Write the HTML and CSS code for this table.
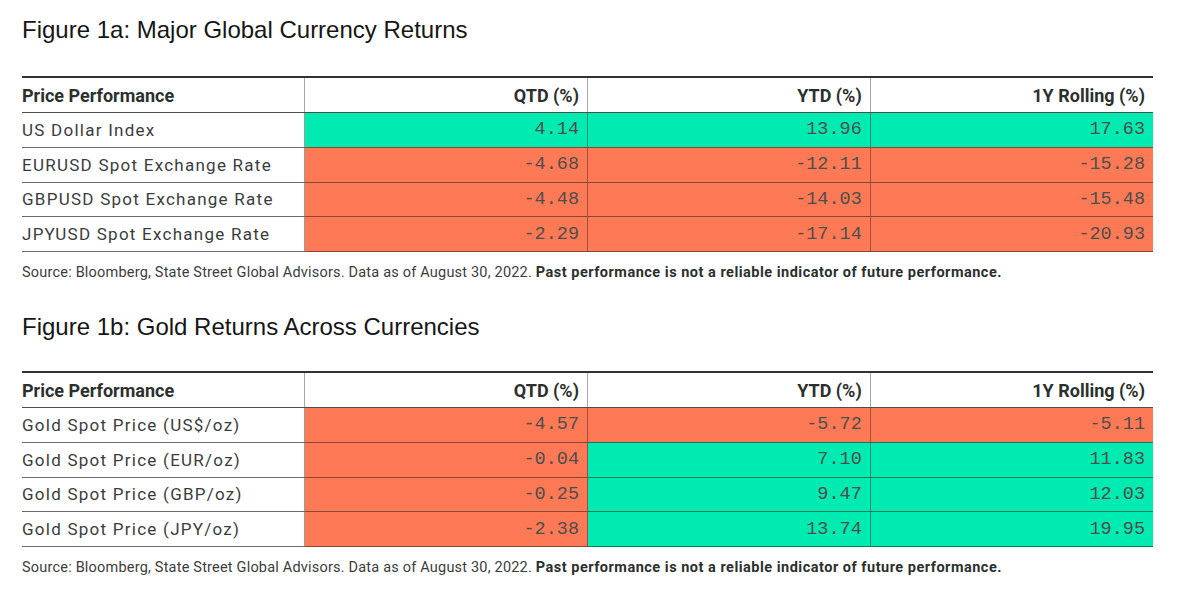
FILE: index.html
```html
<!DOCTYPE html>
<html>
<head>
<meta charset="utf-8">
<link rel="stylesheet" href="styles.css">
</head>
<body>
<div class="page">
  <section class="figure">
    <h1 class="title">Figure 1a: Major Global Currency Returns</h1>
    <table class="perf">
      <thead>
        <tr><th class="lbl">Price Performance</th><th>QTD (%)</th><th>YTD (%)</th><th>1Y Rolling (%)</th></tr>
      </thead>
      <tbody>
        <tr><td class="lbl">US Dollar Index</td><td class="pos">4.14</td><td class="pos">13.96</td><td class="pos">17.63</td></tr>
        <tr><td class="lbl">EURUSD Spot Exchange Rate</td><td class="neg">-4.68</td><td class="neg">-12.11</td><td class="neg">-15.28</td></tr>
        <tr><td class="lbl">GBPUSD Spot Exchange Rate</td><td class="neg">-4.48</td><td class="neg">-14.03</td><td class="neg">-15.48</td></tr>
        <tr><td class="lbl">JPYUSD Spot Exchange Rate</td><td class="neg">-2.29</td><td class="neg">-17.14</td><td class="neg">-20.93</td></tr>
      </tbody>
    </table>
    <p class="source">Source: Bloomberg, State Street Global Advisors. Data as of August 30, 2022. <b>Past performance is not a reliable indicator of future performance.</b></p>
  </section>
  <section class="figure second">
    <h1 class="title">Figure 1b: Gold Returns Across Currencies</h1>
    <table class="perf">
      <thead>
        <tr><th class="lbl">Price Performance</th><th>QTD (%)</th><th>YTD (%)</th><th>1Y Rolling (%)</th></tr>
      </thead>
      <tbody>
        <tr><td class="lbl">Gold Spot Price (US$/oz)</td><td class="neg">-4.57</td><td class="neg">-5.72</td><td class="neg">-5.11</td></tr>
        <tr><td class="lbl">Gold Spot Price (EUR/oz)</td><td class="neg">-0.04</td><td class="pos">7.10</td><td class="pos">11.83</td></tr>
        <tr><td class="lbl">Gold Spot Price (GBP/oz)</td><td class="neg">-0.25</td><td class="pos">9.47</td><td class="pos">12.03</td></tr>
        <tr><td class="lbl">Gold Spot Price (JPY/oz)</td><td class="neg">-2.38</td><td class="pos">13.74</td><td class="pos">19.95</td></tr>
      </tbody>
    </table>
    <p class="source">Source: Bloomberg, State Street Global Advisors. Data as of August 30, 2022. <b>Past performance is not a reliable indicator of future performance.</b></p>
  </section>
</div>
</body>
</html>
```
FILE: styles.css
```css
html, body {
  margin: 0;
  padding: 0;
  background: #ffffff;
}

.page {
  padding: 16px 0 0 22px;
  width: 1131px;
}

.title {
  margin: 0 0 33px 0;
  font-family: "Liberation Sans", Arial, sans-serif;
  font-weight: 400;
  font-size: 24px;
  line-height: 27px;
  color: #161616;
}

.second {
  margin-top: 32px;
}

.second .title {
  margin-bottom: 31px;
}

.perf {
  width: 1131px;
  table-layout: fixed;
  border-collapse: collapse;
  border-top: 2px solid #2f3432;
}

.perf th {
  height: 34px;
  padding: 0 8px 0 0;
  text-align: right;
  font-family: Roboto, "Liberation Sans", sans-serif;
  font-weight: 700;
  font-size: 18px;
  letter-spacing: 0px;
  color: #2b302e;
  border-bottom: 1px solid #4a4f4d;
  border-left: 1px solid #a8a8a8;
  vertical-align: middle;
}

.perf th.lbl {
  text-align: left;
  border-left: none;
  padding-left: 0;
}

.perf td {
  height: 33.75px;
  padding: 0 8px 0 0;
  text-align: right;
  font-family: "Liberation Mono", "DejaVu Sans Mono", monospace;
  font-size: 18.5px;
  color: #4e4e4c;
  border-bottom: 1px solid rgba(40, 30, 25, 0.55);
  border-left: 1px solid rgba(40, 30, 25, 0.45);
  vertical-align: middle;
}

.perf td.lbl {
  text-align: left;
  padding-left: 0;
  border-left: none;
  font-family: Roboto, "Liberation Sans", sans-serif;
  font-weight: 400;
  font-size: 17px;
  letter-spacing: 1.25px;
  color: #3a3d3c;
  border-bottom: 1px solid #6a6d6c;
}

.perf td.pos {
  background: #00ebb1;
}

.perf td.neg {
  background: #fe7a56;
}

.source {
  margin: 12px 0 0 0;
  font-family: Roboto, "Liberation Sans", sans-serif;
  font-size: 14.5px;
  line-height: 17px;
  letter-spacing: 0.2px;
  color: #3a3d3c;
}

.source b {
  font-weight: 700;
  letter-spacing: 0.5px;
  color: #2b302e;
}
```
